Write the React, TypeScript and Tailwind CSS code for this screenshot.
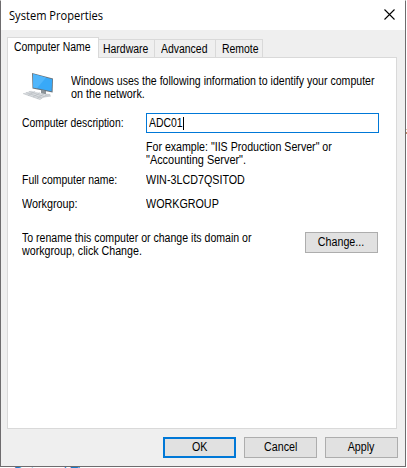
import type { ReactNode } from "react";

function Txt({ children, className = "" }: { children: ReactNode; className?: string }) {
  return <span className={`block w-max origin-left whitespace-pre ${className}`}>{children}</span>;
}

function ComputerIcon() {
  return (
    <svg className="block h-[32px] w-[36px]" viewBox="0 0 36 32">
      <path d="M15 22 L28 23 L29 25.5 L22 26.5 L15 25Z" fill="#c9cdd1" />
      <path d="M19 19 L24 20 L24 24 L19 23Z" fill="#8d9499" />
      <path d="M10 2 L31 7.5 L30.6 21.5 L10.5 17.5Z" fill="#68747d" />
      <path d="M11 3 L30.2 8.2 L29.6 20.3 L11.3 16.5Z" fill="#38a9f8" />
      <path d="M11 3 L24 6.5 L15 17.2 L11.3 16.5Z" fill="#50b6fb" />
      <path d="M1 22.5 L9 19.8 L25 23.5 L18 28.5Z" fill="#d9dcdf" />
      <path d="M1 22.5 L18 28.5 L25 23.5 M4 21.5 L20 27 M7 20.5 L22 25.5 M6 24.5 L13 20.5 M11 26 L18 21.7 M15 27.5 L22 22.8" fill="none" stroke="#b4b9bd" strokeWidth=".6" />
    </svg>
  );
}

function Tab({ label, className }: { label: string; className: string }) {
  return (
    <div className={`h-[18px] border-t border-r border-[#d9d9d9] bg-[#efefef] pt-[3px] ${className}`}>
      <Txt className="scale-x-[0.87]">{label}</Txt>
    </div>
  );
}

function Button({ label, className = "border border-[#adadad]" }: { label: string; className?: string }) {
  return (
    <button className={`flex h-[21px] w-[73px] shrink-0 items-center justify-center bg-[#e1e1e1] ${className}`}>
      <span className="block scale-x-[0.89]">{label}</span>
    </button>
  );
}

export default function App() {
  return (
    <div className="relative isolate h-[468px] w-[407px] overflow-hidden bg-white font-['Liberation_Sans',Arial,sans-serif] text-[12px] leading-[13px] text-black">
      <div className="flex h-[467px] w-[406px] flex-col border-t border-r border-b border-l border-[#6e6c6e] border-t-white bg-[#efefef]">
        <header className="flex h-[29px] shrink-0 items-center justify-between bg-white pr-[10px] pl-[8px]">
          <Txt className="font-['Open_Sans',sans-serif] scale-x-[0.925]">System Properties</Txt>
          <svg className="mt-[-2px] h-[11px] w-[11px]" viewBox="0 0 11 11"><path d="M.5 .5 L10.5 10.5 M10.5 .5 L.5 10.5" stroke="#000" strokeWidth="1.1" /></svg>
        </header>
        <div className="mt-[7px] flex h-[20px] shrink-0 items-end pl-[6px]">
          <div className="z-10 -mb-px h-[21px] w-[92px] border-t border-r border-l border-[#d9d9d9] bg-white pt-[3px] pl-[6px]">
            <Txt className="scale-x-[0.87]">Computer Name</Txt>
          </div>
          <Tab label="Hardware" className="w-[56px] pl-[4px]" />
          <Tab label="Advanced" className="w-[61px] pl-[6px]" />
          <Tab label="Remote" className="w-[47px] pl-[6px]" />
        </div>
        <main className="ml-[6px] h-[372px] w-[390px] shrink-0 border border-[#d9d9d9] bg-white pl-[14px]">
          <div className="flex h-[57px] pt-[12px]">
            <div className="w-[49px] shrink-0 pt-px"><ComputerIcon /></div>
            <div className="pt-[5px]">
              <Txt className="scale-x-[0.88]">Windows uses the following information to identify your computer</Txt>
              <Txt className="scale-x-[0.9]">on the network.</Txt>
            </div>
          </div>
          <div className="mt-[-2px] flex h-[20px] items-center">
            <label className="w-[124px] shrink-0"><Txt className="scale-x-[0.865]">Computer description:</Txt></label>
            <div className="flex h-[20px] w-[233px] items-center border border-[#0078d7] pl-[2px]">
              <div className="w-[34px]"><Txt className="scale-x-[0.87]">ADC01</Txt></div>
              <span className="h-[13px] w-px bg-black" />
            </div>
          </div>
          <div className="mt-[8px] ml-[124px]">
            <Txt className="scale-x-[0.885]">For example: "IIS Production Server" or</Txt>
            <Txt className="scale-x-[0.91]">"Accounting Server".</Txt>
          </div>
          <div className="mt-[7px] flex">
            <div className="w-[124px]"><Txt className="scale-x-[0.87]">Full computer name:</Txt></div>
            <Txt className="scale-x-[0.895]">WIN-3LCD7QSITOD</Txt>
          </div>
          <div className="mt-[11px] flex">
            <div className="w-[124px]"><Txt className="scale-x-[0.9]">Workgroup:</Txt></div>
            <Txt className="scale-x-[0.895]">WORKGROUP</Txt>
          </div>
          <div className="mt-[21px] flex">
            <div className="w-[283px] shrink-0">
              <Txt className="scale-x-[0.88]">To rename this computer or change its domain or</Txt>
              <Txt className="scale-x-[0.89]">workgroup, click Change.</Txt>
            </div>
            <Button label="Change..." />
          </div>
        </main>
        <footer className="mt-[8px] flex gap-[8px] pl-[162px]">
          <Button label="OK" className="border-2 border-[#0078d7]" />
          <Button label="Cancel" />
          <Button label="Apply" />
        </footer>
      </div>
      <div className="absolute top-[464px] left-[14px] -z-10 text-[13px] leading-[15px] text-[#1979ca]">Date and Time</div>
      <div className="absolute top-[129px] left-[406px] h-px w-px bg-[#e1c7a9]" />
      <div className="absolute top-[132px] left-[406px] h-[2px] w-px bg-[#bd8d69]" />
    </div>
  );
}
